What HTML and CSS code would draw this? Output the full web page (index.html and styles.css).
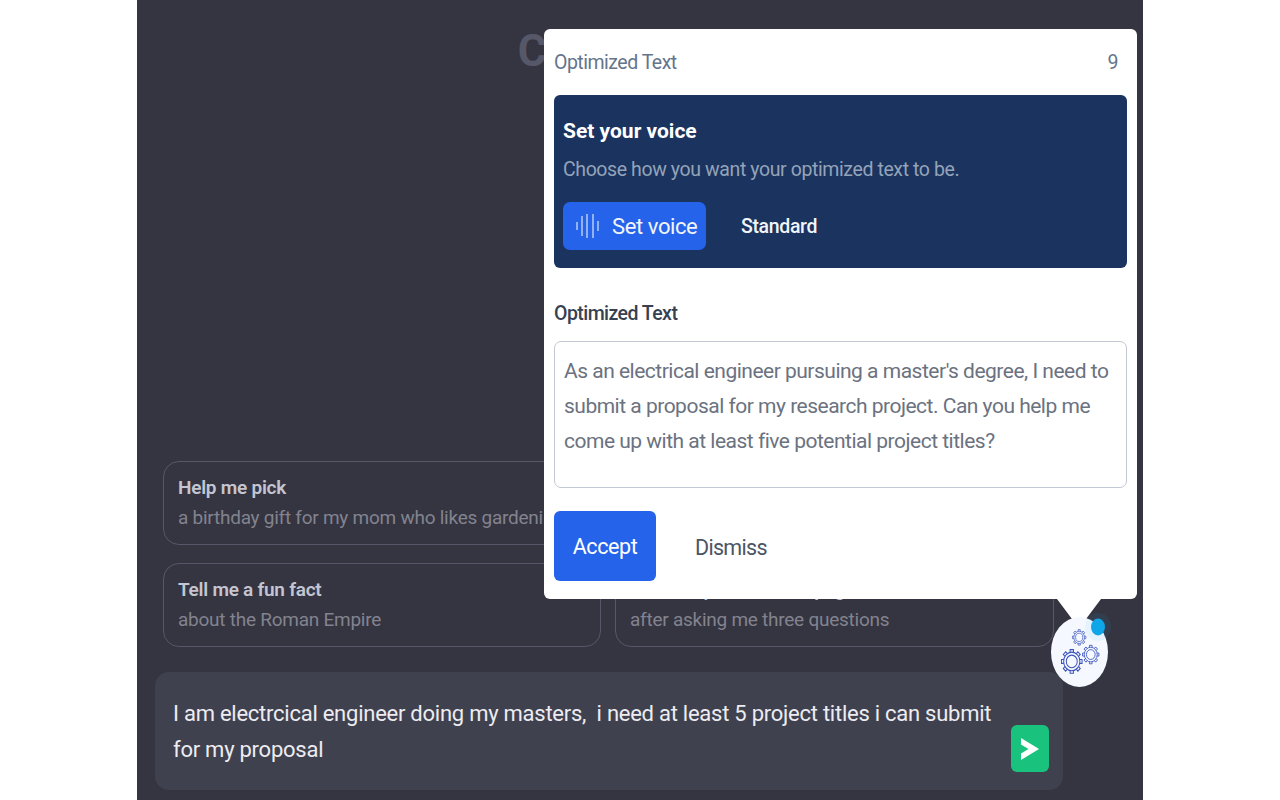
FILE: index.html
```html
<!DOCTYPE html>
<html lang="en">
<head>
<meta charset="utf-8">
<title>Optimized Text</title>
<link rel="stylesheet" href="styles.css">
</head>
<body>
<main class="chat">
  <h1 class="title">ChatGPT Plus</h1>
  <div class="suggestions">
    <div class="card"><b>Help me pick</b><span>a birthday gift for my mom who likes gardening</span></div>
    <div class="card"><b>Show me a code snippet</b><span>of a website's sticky header</span></div>
    <div class="card"><b>Tell me a fun fact</b><span>about the Roman Empire</span></div>
    <div class="card"><b>Create a personal webpage for me</b><span>after asking me three questions</span></div>
  </div>
  <div class="composer">
    <p class="prompt">I am electrcical engineer doing my masters,&nbsp; i need at least 5 project titles i can submit for my proposal</p>
    <button class="send" aria-label="Send">
      <svg width="20" height="24" viewBox="0 0 20 24"><path class="send-arrow" d="M1 1 19 12 1 23V16.500L8.500 12 1 7.500Z"/></svg>
    </button>
  </div>
</main>

<section class="popup">
  <header class="popup-head"><span>Optimized Text</span><span class="count">9</span></header>
  <div class="voice">
    <h2>Set your voice</h2>
    <p>Choose how you want your optimized text to be.</p>
    <div class="voice-row">
      <button class="voice-btn">
        <svg width="26" height="26" viewBox="0 0 26 26"><path class="wave" d="M2 9v8M7 3v20M12 1v24M18 1v24M23 8v10"/></svg>
        Set voice
      </button>
      <span class="standard">Standard</span>
    </div>
  </div>
  <label class="field-label">Optimized Text</label>
  <div class="field">As an electrical engineer pursuing a master's degree, I need to submit a proposal for my research project. Can you help me come up with at least five potential project titles?</div>
  <div class="actions">
    <button class="accept">Accept</button>
    <button class="dismiss">Dismiss</button>
  </div>
</section>

<div class="widget">
  <svg class="widget-art" width="72" height="92" viewBox="0 0 72 92">
    <defs>
      <g id="gear">
        <circle cx="12" cy="12" r="8.300"/>
        <circle cx="12" cy="12" r="5.600"/>
        <path d="M10.300 3.900V1.500h3.400v2.400"/>
        <path transform="rotate(45 12 12)" d="M10.300 3.900V1.500h3.400v2.400"/>
        <path transform="rotate(90 12 12)" d="M10.300 3.900V1.500h3.400v2.400"/>
        <path transform="rotate(135 12 12)" d="M10.300 3.900V1.500h3.400v2.400"/>
        <path transform="rotate(180 12 12)" d="M10.300 3.900V1.500h3.400v2.400"/>
        <path transform="rotate(225 12 12)" d="M10.300 3.900V1.500h3.400v2.400"/>
        <path transform="rotate(270 12 12)" d="M10.300 3.900V1.500h3.400v2.400"/>
        <path transform="rotate(315 12 12)" d="M10.300 3.900V1.500h3.400v2.400"/>
      </g>
    </defs>
    <path class="tail" d="M7 0H51L33 24H25Z"/>
    <ellipse class="bubble" cx="29.500" cy="53" rx="28.500" ry="35"/>
    <ellipse class="halo" cx="48" cy="28" rx="13" ry="14"/>
    <ellipse class="dot" cx="48" cy="28" rx="7" ry="8.500"/>
    <use href="#gear" class="gear" transform="translate(21.500 29.500) scale(.64 .74)"/>
    <use href="#gear" class="gear" transform="translate(10 49) scale(.98 1.120)"/>
    <use href="#gear" class="gear" transform="translate(31.400 45) scale(.78 .88)"/>
  </svg>
</div>
</body>
</html>
```

FILE: styles.css
```css
* { box-sizing: border-box; }
html, body { margin: 0; height: 100%; overflow: hidden; }
body {
  background: #fff;
  font-family: Roboto, sans-serif;
  position: relative;
}
.chat {
  width: 1006px;
  height: 800px;
  margin-left: 137px;
  background: #343541;
  display: flex;
  flex-direction: column;
  overflow: hidden;
  padding: 20px 80px 10px 18px;
}
.title {
  margin: 0 0 auto;
  padding-left: 92px;
  font-size: 44px;
  line-height: 62px;
  font-weight: 700;
  color: #565869;
  text-align: center;
}
.suggestions {
  display: grid;
  grid-template-columns: 438px 439px;
  gap: 18px 14px;
  margin-left: 8px;
}
.card {
  height: 84px;
  border: 1px solid #565869;
  border-radius: 16px;
  padding: 14px 14px 0;
  display: flex;
  flex-direction: column;
  gap: 6px;
  white-space: nowrap;
  overflow: hidden;
  font-size: 19px;
  line-height: 24px;
  letter-spacing: -.25px;
}
.card b { color: #c5c5d2; font-weight: 600; }
.card span { color: #83838f; }
.composer {
  margin-top: 25px;
  height: 118px;
  width: 908px;
  background: #40414f;
  border-radius: 14px;
  padding: 24px 16px 0 18px;
  position: relative;
}
.prompt {
  margin: 0;
  width: 830px;
  color: #ececf1;
  font-size: 22px;
  line-height: 36px;
  letter-spacing: -.25px;
}
.send {
  position: absolute;
  right: 14px;
  top: 53px;
  width: 38px;
  height: 47px;
  border: 0;
  padding: 0;
  border-radius: 6px;
  background: #19c37d;
  display: flex;
  align-items: center;
  justify-content: center;
}
.send-arrow { fill: #fff; }
.popup {
  position: absolute;
  left: 544px;
  top: 29px;
  width: 593px;
  height: 570px;
  background: #fff;
  border-radius: 6px;
  padding: 0 10px;
}
.popup-head {
  height: 66px;
  display: flex;
  justify-content: space-between;
  align-items: center;
  padding-right: 9px;
  color: #64748b;
  font-size: 19.500px;
  letter-spacing: -.5px;
}
.voice {
  height: 173px;
  background: #1b335f;
  border-radius: 6px;
  padding: 22px 9px 0;
}
.voice h2 {
  margin: 0;
  color: #fff;
  font-size: 21px;
  line-height: 28px;
  font-weight: 700;
}
.voice p {
  margin: 11px 0 0;
  color: #94a3b8;
  font-size: 19.500px;
  line-height: 28px;
  letter-spacing: -.4px;
}
.voice-row {
  margin-top: 18px;
  display: flex;
  align-items: center;
}
.voice-btn {
  width: 143px;
  height: 48px;
  border: 0;
  border-radius: 7px;
  background: #2563eb;
  color: #f1f5f9;
  font: inherit;
  font-size: 22px;
  letter-spacing: -.4px;
  display: flex;
  align-items: center;
  gap: 11px;
  padding: 0 0 0 12px;
}
.wave { stroke: #dbe6fb; stroke-width: 1.200; fill: none; }
.standard {
  margin-left: 35px;
  color: #f1f5f9;
  font-size: 19.500px;
  font-weight: 500;
  letter-spacing: -.35px;
}
.field-label {
  display: block;
  margin-top: 33px;
  color: #374151;
  font-size: 19.500px;
  font-weight: 500;
  line-height: 26px;
  letter-spacing: -.55px;
}
.field {
  margin-top: 14px;
  height: 147px;
  border: 1px solid #c4c8d2;
  border-radius: 7px;
  padding: 12px 9px 0;
  color: #6b7280;
  font-size: 21px;
  line-height: 35px;
  letter-spacing: -.5px;
}
.actions {
  margin-top: 23px;
  display: flex;
  align-items: center;
}
.accept {
  width: 102px;
  height: 70px;
  border: 0;
  border-radius: 6px;
  background: #2563eb;
  color: #fff;
  font: inherit;
  font-size: 21.500px;
  padding-top: 2px;
  letter-spacing: -.4px;
}
.dismiss {
  margin-left: 39px;
  border: 0;
  padding: 2px 0 0;
  background: none;
  color: #4b5563;
  font: inherit;
  font-size: 21.500px;
  letter-spacing: -.7px;
}
.widget {
  position: absolute;
  left: 1050px;
  top: 599px;
}
.widget-art { display: block; overflow: visible; }
.tail { fill: #fff; }
.bubble { fill: #f5f8ff; }
.halo { fill: #38bdf8; opacity: .08; }
.dot { fill: #0ea5e9; }
.gear { fill: none; stroke: #3a52bc; stroke-width: 1; }
```
